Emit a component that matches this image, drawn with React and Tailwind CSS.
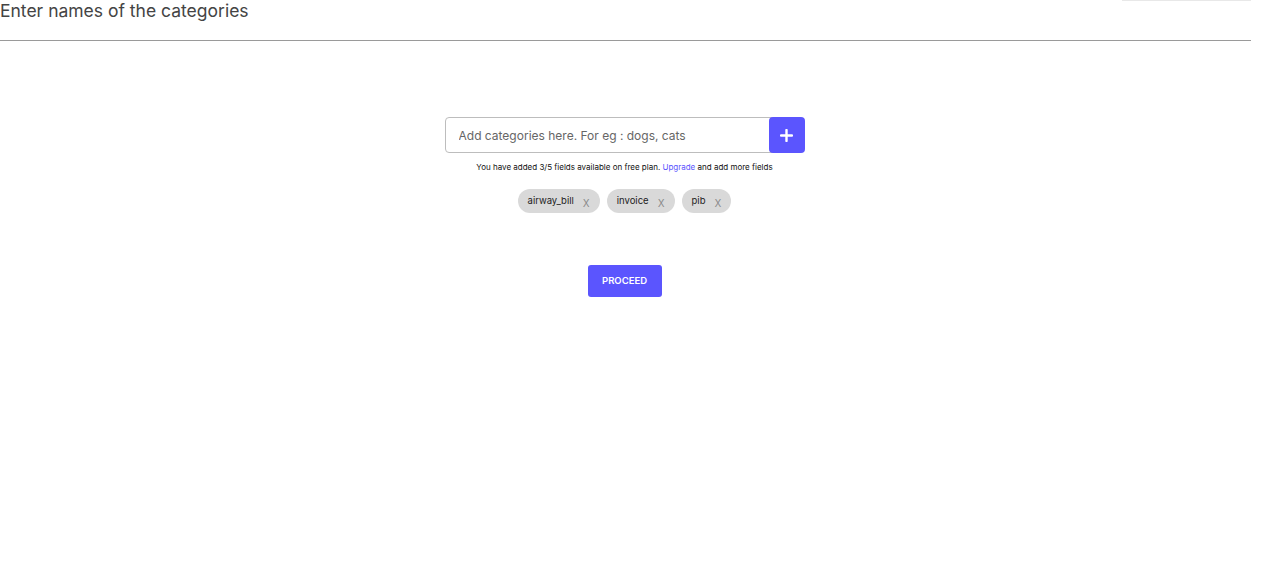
import { useState } from "react"

function App(){
 const [chips, setChips] = useState(["airway_bill","invoice","pib"])
 const [value, setValue] = useState("")

 const addChip = () => {
  if (!value.trim()) return
  setChips([...chips, value.trim()])
  setValue("")
 }

 return(
  <div className="min-h-screen bg-white font-['Inter',sans-serif]">
   <div className="w-[1251px] relative">
    {/* leftover bar from the top area */}
    <div className="absolute right-0 top-0 w-[129px] h-[1px] bg-[#e8e8e8]"></div>

    <div className="h-[40px] border-b border-[#9a9a9a] box-content">
     <h1 className="text-[17.5px] leading-[22px] text-[#444]">
      Enter names of the categories
     </h1>
    </div>

    <div className="flex flex-col items-center pt-[76px] pr-[2px]">
     <div className="flex items-center">
      <input
       value={value}
       onChange={(e) => setValue(e.target.value)}
       placeholder="Add categories here. For eg : dogs, cats"
       className="w-[328px] h-[36px] border border-[#bdbdbd] rounded-l-[4px] pl-[13px] text-[12px] text-[#333] placeholder:text-[#666] outline-none"
      />
      <button
       onClick={addChip}
       className="-ml-[4px] w-[36px] h-[36px] bg-[#5b55fe] rounded-[4px] flex items-center justify-center"
      >
       <svg width="13" height="13" viewBox="0 0 13 13">
        <path d="M6.5 1v11M1 6.5h11" stroke="white" strokeWidth="2.4" strokeLinecap="round" />
       </svg>
      </button>
     </div>

     <p className="mt-[8px] text-[8px] leading-[12px] text-[#111]">
      You have added 3/5 fields available on free plan. <span className="text-[#5b55fe]">Upgrade</span> and add more fields
     </p>

     <div className="flex gap-[7px] mt-[16px]">
      {chips.map((chip, idx) => (
       <div key={idx} className="h-[24px] rounded-full bg-[#d9d9d9] flex items-center pl-[10px] pr-[10px]">
        <span className="text-[9.5px] text-[#222]">{chip}</span>
        <button
         onClick={() => setChips(chips.filter((_, i) => i !== idx))}
         className="ml-[9px] mt-[3px] text-[13px] leading-none text-[#888] font-light"
        >
         x
        </button>
       </div>
      ))}
     </div>

     <button className="mt-[52px] w-[74px] h-[32px] bg-[#5b55fe] rounded-[3px] text-white text-[9.5px] font-semibold">
      PROCEED
     </button>
    </div>
   </div>
  </div>
 )
}

export default App
